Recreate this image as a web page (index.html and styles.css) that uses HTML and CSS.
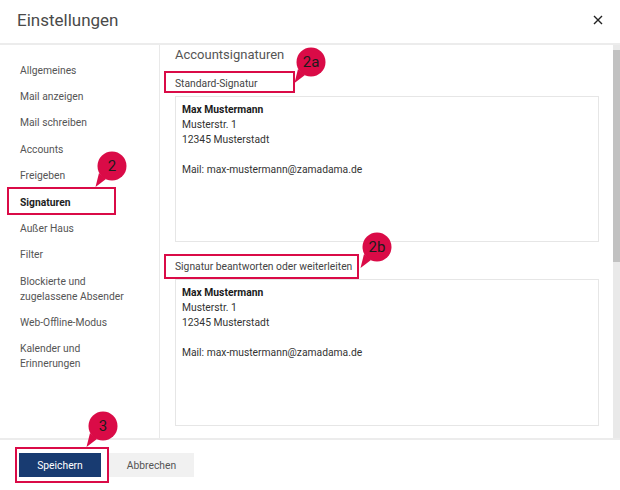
FILE: index.html
```html
<!DOCTYPE html>
<html lang="de">
<head>
<meta charset="utf-8">
<title>Einstellungen</title>
<link rel="stylesheet" href="styles.css">
</head>
<body>
<div class="dialog">
  <header class="head">
    <h1 class="title">Einstellungen</h1>
    <button class="close" aria-label="Schließen">
      <svg width="10" height="10" viewBox="0 0 10 10"><path d="M1 1 L9 9 M9 1 L1 9" stroke="#222" stroke-width="1.4" fill="none"/></svg>
    </button>
  </header>
  <div class="main">
    <nav class="side">
      <ul class="menu">
        <li class="item">Allgemeines</li>
        <li class="item">Mail anzeigen</li>
        <li class="item">Mail schreiben</li>
        <li class="item">Accounts</li>
        <li class="item">Freigeben</li>
        <li class="item active">Signaturen</li>
        <li class="item">Außer Haus</li>
        <li class="item">Filter</li>
        <li class="item">Blockierte und<br>zugelassene Absender</li>
        <li class="item">Web-Offline-Modus</li>
        <li class="item">Kalender und<br>Erinnerungen</li>
      </ul>
    </nav>
    <section class="content">
      <h2 class="heading">Accountsignaturen</h2>
      <div class="label label-std">Standard-Signatur</div>
      <div class="sig sig-first">
        <b class="sig-name">Max Mustermann</b><br>
        Musterstr. 1<br>
        12345 Musterstadt<br>
        <br>
        Mail: max-mustermann@zamadama.de
      </div>
      <div class="label label-reply">Signatur beantworten oder weiterleiten</div>
      <div class="sig sig-second">
        <b class="sig-name">Max Mustermann</b><br>
        Musterstr. 1<br>
        12345 Musterstadt<br>
        <br>
        Mail: max-mustermann@zamadama.de
      </div>
    </section>
    <div class="scrollbar"><div class="thumb"></div></div>
  </div>
  <footer class="foot">
    <button class="btn btn-primary">Speichern</button>
    <button class="btn btn-secondary">Abbrechen</button>
  </footer>

  <div class="bubble bubble-2">
    <svg class="bubble-shape" width="40" height="44" viewBox="0 0 40 44"><circle cx="22" cy="15" r="14.5"/><polygon points="16,28 9,22 5.5,36"/></svg>
    <span class="bubble-num">2</span>
  </div>
  <div class="bubble bubble-2a">
    <svg class="bubble-shape" width="40" height="44" viewBox="0 0 40 44"><circle cx="22" cy="15" r="14.5"/><polygon points="16,28 9,22 5.5,36"/></svg>
    <span class="bubble-num">2a</span>
  </div>
  <div class="bubble bubble-2b">
    <svg class="bubble-shape" width="40" height="44" viewBox="0 0 40 44"><circle cx="22" cy="15" r="14.5"/><polygon points="16,28 9,22 5.5,36"/></svg>
    <span class="bubble-num">2b</span>
  </div>
  <div class="bubble bubble-3">
    <svg class="bubble-shape" width="40" height="44" viewBox="0 0 40 44"><circle cx="22" cy="15" r="14.5"/><polygon points="16,28 9,22 5.5,36"/></svg>
    <span class="bubble-num">3</span>
  </div>
</div>
</body>
</html>
```
FILE: styles.css
```css
html, body {
  margin: 0;
  padding: 0;
}
body {
  width: 620px;
  height: 490px;
  overflow: hidden;
  background: #fff;
  font-family: Roboto, "Liberation Sans", Arial, sans-serif;
  color: #444;
}
.dialog {
  position: relative;
  width: 620px;
  height: 490px;
  display: flex;
  flex-direction: column;
}

/* header */
.head {
  flex: none;
  box-sizing: border-box;
  border-bottom: 2px solid #ececec;
  height: 45px;
  padding: 0 17px 3px 17px;
  display: flex;
  align-items: center;
  justify-content: space-between;
}
.title {
  margin: 0;
  font-size: 17px;
  font-weight: 400;
  color: #4a4a4a;
  line-height: 24px;
}
.close {
  border: 0;
  background: none;
  padding: 0;
  width: 10px;
  height: 10px;
  display: flex;
}

/* main */
.main {
  flex: none;
  height: 393px;
  border-bottom: 2px solid #ececec;
  display: flex;
}
.side {
  width: 160px;
  flex: none;
  border-right: 1px solid #e9e9e9;
  padding-top: 12px;
  box-sizing: border-box;
}
.menu {
  list-style: none;
  margin: 0;
  padding: 0 0 0 20px;
}
.item {
  position: relative;
  font-size: 10.3px;
  line-height: 15px;
  padding: 5.7px 0;
  color: #555;
}
.item.active {
  font-weight: 700;
  color: #1e1e1e;
}
.item.active::after {
  content: "";
  position: absolute;
  left: -13px;
  top: -2px;
  width: 109px;
  height: 28px;
  box-sizing: border-box;
  border: 2px solid #da0b47;
}

.content {
  flex: 1;
  min-width: 0;
  padding: 0 14px 0 15px;
  overflow: hidden;
}
.heading {
  margin: 0 0 7px;
  font-size: 13px;
  font-weight: 400;
  line-height: 20px;
  color: #555;
}
.label {
  position: relative;
  height: 24px;
  line-height: 24px;
  font-size: 10.3px;
  color: #444;
}
.label::after {
  content: "";
  position: absolute;
  left: -11px;
  top: -1px;
  box-sizing: border-box;
  border: 2px solid #da0b47;
}
.label-std::after {
  width: 131px;
  height: 22px;
}
.label-reply {
  margin-top: 13px;
}
.label-reply::after {
  width: 195px;
  height: 25px;
}
.sig {
  box-sizing: border-box;
  border: 1px solid #e6e6e6;
  padding: 4.5px 6px;
  font-size: 10.3px;
  line-height: 15px;
  color: #333;
}
.sig-first {
  height: 146px;
}
.sig-second {
  height: 147px;
}
.sig-name {
  color: #1a1a1a;
  font-weight: 700;
}

.scrollbar {
  width: 7px;
  flex: none;
  background: #e9e9e9;
}
.thumb {
  margin-top: 5px;
  height: 212px;
  background: #c1c1c1;
}

/* footer */
.foot {
  flex: 1;
  display: flex;
  align-items: flex-start;
  gap: 8px;
  padding: 13px 0 0 19px;
}
.btn {
  position: relative;
  height: 24px;
  border: 0;
  padding: 0;
  font-family: inherit;
  font-size: 10.3px;
}
.btn-primary {
  width: 82px;
  background: #183b71;
  color: #fff;
}
.btn-primary::after {
  content: "";
  position: absolute;
  left: -4px;
  top: -6px;
  width: 94px;
  height: 36px;
  box-sizing: border-box;
  border: 2px solid #da0b47;
}
.btn-secondary {
  width: 85px;
  background: #f1f1f1;
  color: #555;
}

/* annotation bubbles */
.bubble {
  position: absolute;
  width: 40px;
  height: 44px;
}
.bubble-shape {
  display: block;
  fill: #da0b47;
}
.bubble-num {
  position: absolute;
  left: 7.5px;
  top: 0;
  width: 29px;
  height: 29px;
  display: flex;
  align-items: center;
  justify-content: center;
  font-size: 15px;
  color: #1b1b1b;
}
.bubble-2 { left: 90px; top: 151px; }
.bubble-2a { left: 289px; top: 47px; }
.bubble-2b { left: 355px; top: 232px; }
.bubble-3 { left: 81px; top: 411px; }
```
